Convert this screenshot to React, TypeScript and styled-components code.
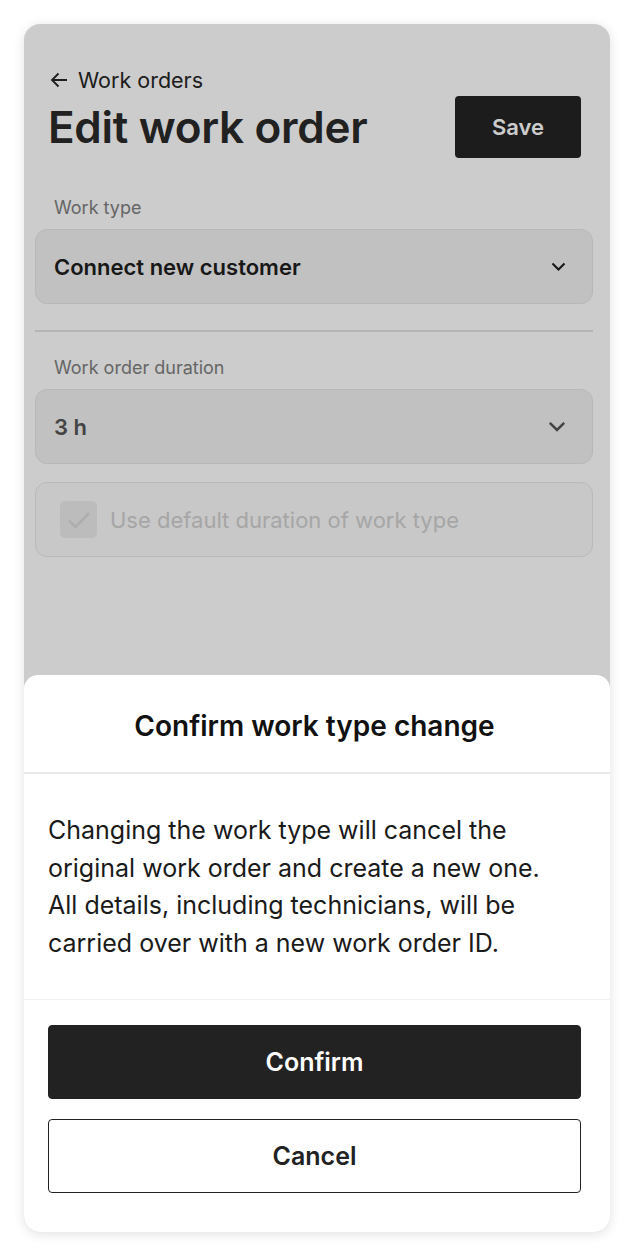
import React from 'react';
import styled, { createGlobalStyle } from 'styled-components';

const GlobalStyle = createGlobalStyle`
  * { box-sizing: border-box; }
  body {
    margin: 0;
    background: #ffffff;
    font-family: Inter, "Noto Sans", sans-serif;
  }
`;

const App = () => {
  return (
    <>
      <GlobalStyle />
      <Page>
        <Card>
          <Content>
            <Header>
              <TitleBlock>
                <BackLink>
                  <svg width="18" height="16" viewBox="0 0 18 16" fill="none">
                    <path d="M17 8H2M8.5 1.5L2 8L8.5 14.5" stroke="#262626" strokeWidth="1.8" />
                  </svg>
                  Work orders
                </BackLink>
                <Title>Edit work order</Title>
              </TitleBlock>
              <SaveButton>Save</SaveButton>
            </Header>

            <Field>
              <Label>Work type</Label>
              <Select>
                <SelectValue>Connect new customer</SelectValue>
                <Chevron size={15} color="#1e1e1e" />
              </Select>
            </Field>

            <Divider />

            <Field $tight>
              <Label>Work order duration</Label>
              <Select>
                <SelectValue $muted>3 h</SelectValue>
                <Chevron size={18} color="#555555" />
              </Select>
            </Field>

            <CheckRow>
              <CheckBox>
                <svg width="24" height="20" viewBox="0 0 24 20" fill="none">
                  <path d="M2 10.5L8.5 17L22 3" stroke="#d9d9d9" strokeWidth="2.6" />
                </svg>
              </CheckBox>
              <CheckLabel>Use default duration of work type</CheckLabel>
            </CheckRow>
          </Content>

          <Backdrop />

          <Sheet>
            <SheetHeader>Confirm work type change</SheetHeader>
            <SheetBody>
              Changing the work type will cancel the original work order and create a new one.
              All details, including technicians, will be carried over with a new work order ID.
            </SheetBody>
            <SheetFooter>
              <ActionButton $primary>Confirm</ActionButton>
              <ActionButton>Cancel</ActionButton>
            </SheetFooter>
          </Sheet>
        </Card>
      </Page>
    </>
  );
};

const Chevron = ({ size, color }: { size: number; color: string }) => (
  <svg width={size} height={size * 0.6} viewBox="0 0 20 12" fill="none">
    <path d="M2 2L10 10L18 2" stroke={color} strokeWidth="2.8" />
  </svg>
);

export default App;

const Page = styled.div`
  padding: 24px;
  height: 1256px;
`;

const Card = styled.div`
  position: relative;
  width: 586px;
  height: 1208px;
  border-radius: 16px;
  overflow: hidden;
  background: #ffffff;
  box-shadow: 0 2px 12px rgba(0, 0, 0, 0.12);
  display: flex;
  flex-direction: column;
`;

const Content = styled.div`
  padding: 44px 17px 0 11px;
  display: flex;
  flex-direction: column;
`;

const Header = styled.div`
  display: flex;
  justify-content: space-between;
  align-items: flex-start;
  padding: 0 12px 0 13px;
`;

const TitleBlock = styled.div`
  display: flex;
  flex-direction: column;
`;

const BackLink = styled.div`
  display: flex;
  align-items: center;
  gap: 10px;
  font-size: 21.5px;
  color: #262626;
  line-height: 24px;
  padding-left: 2px;
`;

const Title = styled.h1`
  margin: 9px 0 0;
  font-size: 44px;
  font-weight: 600;
  letter-spacing: -0.3px;
  color: #2a2a2a;
  line-height: 52px;
`;

const SaveButton = styled.button`
  margin-top: 28px;
  width: 126px;
  height: 62px;
  border: none;
  border-radius: 4px;
  background: #232323;
  color: #ffffff;
  font-family: inherit;
  font-size: 22px;
  font-weight: 600;
`;

const Field = styled.div<{ $tight?: boolean }>`
  display: flex;
  flex-direction: column;
  margin-top: ${(p) => (p.$tight ? '25px' : '39px')};
`;

const Label = styled.div`
  font-size: 18px;
  color: #808080;
  padding-left: 19px;
  line-height: 22px;
  margin-bottom: 10px;
`;

const Select = styled.div`
  height: 75px;
  border: 1.5px solid #e6e6e6;
  border-radius: 12px;
  background: #f2f2f2;
  display: flex;
  align-items: center;
  justify-content: space-between;
  padding: 0 26px 0 18px;
`;

const SelectValue = styled.span<{ $muted?: boolean }>`
  font-size: 22px;
  font-weight: 600;
  color: ${(p) => (p.$muted ? '#555555' : '#1e1e1e')};
`;

const Divider = styled.hr`
  border: none;
  height: 2px;
  background: #e2e2e2;
  margin: 26px 0 0;
`;

const CheckRow = styled.div`
  margin-top: 18px;
  height: 75px;
  border: 1.5px solid #e8e8e8;
  border-radius: 12px;
  background: #fafafa;
  display: flex;
  align-items: center;
  gap: 13px;
  padding-left: 24px;
`;

const CheckBox = styled.div`
  width: 37px;
  height: 37px;
  border-radius: 5px;
  background: #ececec;
  display: flex;
  align-items: center;
  justify-content: center;
`;

const CheckLabel = styled.span`
  font-size: 22px;
  color: #d0d0d0;
`;

const Backdrop = styled.div`
  position: absolute;
  inset: 0;
  background: rgba(0, 0, 0, 0.2);
`;

const Sheet = styled.div`
  position: relative;
  z-index: 1;
  margin-top: auto;
  height: 557px;
  background: #ffffff;
  border-radius: 14px 14px 0 0;
  display: flex;
  flex-direction: column;
`;

const SheetHeader = styled.div`
  height: 99px;
  border-bottom: 2px solid #e8e8e8;
  display: flex;
  align-items: center;
  justify-content: center;
  padding: 4px 29px 0 24px;
  font-size: 28px;
  font-weight: 600;
  color: #111111;
`;

const SheetBody = styled.div`
  height: 226px;
  border-bottom: 1px solid #f0f0f0;
  padding: 38px 42px 0 24px;
  font-size: 25px;
  line-height: 37.5px;
  color: #1a1a1a;
`;

const SheetFooter = styled.div`
  display: flex;
  flex-direction: column;
  gap: 20px;
  padding: 25px 29px 0 24px;
`;

const ActionButton = styled.button<{ $primary?: boolean }>`
  height: 74px;
  border-radius: 4px;
  border: 1.5px solid #222222;
  background: ${(p) => (p.$primary ? '#222222' : '#ffffff')};
  color: ${(p) => (p.$primary ? '#ffffff' : '#222222')};
  font-family: inherit;
  font-size: 25px;
  font-weight: 600;
`;
